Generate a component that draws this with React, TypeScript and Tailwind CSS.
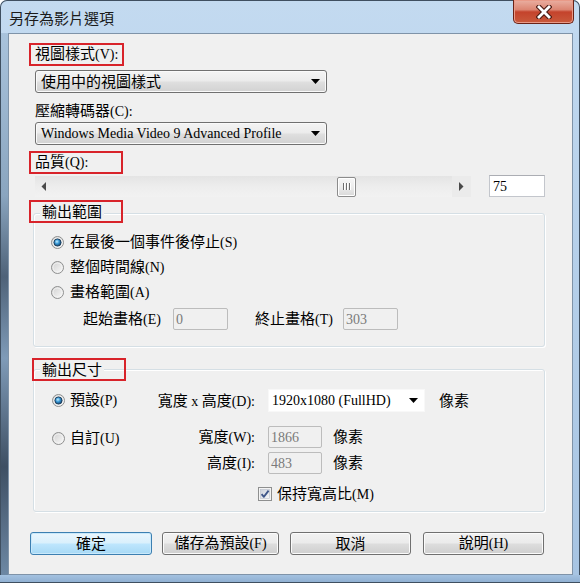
import React from "react";

const CJK = /[\u2E80-\u9FFF\uF900-\uFAFF\uFF00-\uFFEF]/;
const CJK_SPLIT = /([\u2E80-\u9FFF\uF900-\uFAFF\uFF00-\uFFEF]+)/;

function T({ s, className = "" }: { s: string; className?: string }) {
  const parts = s.split(CJK_SPLIT).filter((p) => p.length > 0);
  return (
    <span className={className}>
      {parts.map((p, i) =>
        CJK.test(p) ? (
          <span key={i} className="text-[15px]">
            {p}
          </span>
        ) : (
          <span key={i} className="text-[14px]">
            {p}
          </span>
        )
      )}
    </span>
  );
}

function Arrow() {
  return (
    <svg width="9" height="5" viewBox="0 0 9 5" className="shrink-0">
      <path d="M0 0H9L4.5 5Z" fill="#000" />
    </svg>
  );
}

function Radio({ checked }: { checked?: boolean }) {
  return (
    <svg width="13" height="13" viewBox="0 0 13 13" className="shrink-0">
      <defs>
        <linearGradient id="rbg" x1="0" y1="0" x2="1" y2="1">
          <stop offset="0" stopColor="#cfcfcf" />
          <stop offset="1" stopColor="#fbfbfb" />
        </linearGradient>
        <radialGradient id="rdot" cx="0.42" cy="0.38" r="0.65">
          <stop offset="0" stopColor="#c6f0ff" />
          <stop offset="0.45" stopColor="#3a9ad8" />
          <stop offset="1" stopColor="#0f3d66" />
        </radialGradient>
      </defs>
      <circle cx="6.5" cy="6.5" r="6" fill="url(#rbg)" stroke="#8e8f8f" strokeWidth="1" />
      <circle cx="6.5" cy="6.5" r="4.5" fill="none" stroke="#f4f4f4" strokeWidth="0.8" />
      {checked && <circle cx="6.5" cy="6.5" r="3.6" fill="url(#rdot)" stroke="#1b3a57" strokeWidth="0.9" />}
    </svg>
  );
}

function Check() {
  return (
    <svg width="14" height="14" viewBox="0 0 14 14" className="shrink-0">
      <defs>
        <linearGradient id="cbg" x1="0" y1="0" x2="1" y2="1">
          <stop offset="0" stopColor="#cbd1dc" />
          <stop offset="1" stopColor="#f6f7f9" />
        </linearGradient>
      </defs>
      <rect x="0.5" y="0.5" width="13" height="13" fill="#f4f4f4" stroke="#8e8f8f" />
      <rect x="2.5" y="2.5" width="9" height="9" fill="url(#cbg)" stroke="#b9bfca" strokeWidth="0.6" />
      <path d="M3.6 7.2L5.9 9.8L10.6 3.6" fill="none" stroke="#3e568a" strokeWidth="1.9" strokeLinejoin="round" />
    </svg>
  );
}

function RedBox({ children, className }: { children: React.ReactNode; className: string }) {
  return <div className={"border-2 border-[#d8232a] h-[23px] flex items-center " + className}>{children}</div>;
}

function Combo({ text }: { text: string }) {
  return (
    <div className="ml-[6px] w-[292px] h-[23px] rounded-[3px] border border-[#707070] bg-[linear-gradient(to_bottom,#f4f4f4_0%,#ececec_45%,#dedede_55%,#d2d2d2_100%)] shadow-[inset_0_0_0_1px_#fafafa] flex items-center pl-[5px] pr-[6px]">
      <T s={text} className="flex-1 leading-[16px] whitespace-nowrap" />
      <Arrow />
    </div>
  );
}

function DisabledInput({ value, w }: { value: string; w: string }) {
  return (
    <div className={"h-[22px] border border-[#bcbcbc] rounded-[2px] bg-[#f0f0f0] flex items-center pl-[2px] text-[14px] text-[#7a7a7a] " + w}>
      {value}
    </div>
  );
}

function Btn({ label, primary, className }: { label: string; primary?: boolean; className: string }) {
  return (
    <div
      className={
        "h-[23px] rounded-[3px] border flex items-center justify-center leading-[16px] " +
        (primary
          ? "border-[#3c7fb1] bg-[linear-gradient(to_bottom,#eaf6fd_0%,#d9f0fc_48%,#bee6fd_52%,#a7d9f5_100%)] shadow-[inset_0_0_0_1px_#c9e9fb] "
          : "border-[#707070] bg-[linear-gradient(to_bottom,#f2f2f2_0%,#ebebeb_48%,#dddddd_52%,#cfcfcf_100%)] shadow-[inset_0_0_0_1px_#fbfbfb] ") +
        className
      }
    >
      <T s={label} />
    </div>
  );
}

export default function App() {
  return (
    <div className="w-[580px] h-[583px] overflow-hidden rounded-t-[7px] shadow-[inset_0_0_0_1px_#3f4f60] bg-[linear-gradient(to_bottom,#c3daf0_0%,#b8d2ec_40%,#a9c5e3_100%)] flex flex-col text-black font-['Liberation_Serif','Noto_Sans_CJK_TC',serif]">
      {/* Title bar */}
      <div className="h-[33px] flex items-start shrink-0">
        <div className="pl-[9px] pt-[8px] text-[15px] leading-[20px] text-[#1a1a1a] font-['Noto_Sans_CJK_TC',sans-serif]">
          另存為影片選項
        </div>
        <div className="ml-auto mr-[6px] w-[61px] h-[24px] rounded-b-[5px] border border-t-0 border-[#6a2216] bg-[linear-gradient(to_bottom,#eab0a2_0%,#dc8572_42%,#c4432c_52%,#c95a3c_100%)] shadow-[inset_0_0_0_1px_#e99a88] flex items-center justify-center">
          <svg width="16" height="14" viewBox="0 0 16 14">
            <path d="M3 2L13 12M13 2L3 12" stroke="#4a1a12" strokeWidth="5" strokeLinecap="square" />
            <path d="M3 2L13 12M13 2L3 12" stroke="#ffffff" strokeWidth="2.8" strokeLinecap="square" />
          </svg>
        </div>
      </div>

      {/* Body */}
      <div className="flex h-[542px] shrink-0">
        <div className="w-[8px] bg-[linear-gradient(to_bottom,#a9c3dc_0%,#8aa5bf_30%,#4e6278_45%,#7f9bb8_60%,#3e4f63_80%,#6d88a4_100%)] shadow-[inset_1px_0_0_#3f4f60]" />
        <div className="w-[565px] border border-[#7f93a8] bg-[#f0f0f0] flex flex-col pl-[20px]">
          {/* View style */}
          <RedBox className="mt-[9px] w-[95px] pl-[4px]">
            <T s="視圖樣式(V):" className="leading-[16px]" />
          </RedBox>
          <div className="mt-[4px]">
            <Combo text="使用中的視圖樣式" />
          </div>

          {/* Codec */}
          <div className="mt-[10px] ml-[6px] h-[16px] flex items-center">
            <T s="壓縮轉碼器(C):" className="leading-[16px]" />
          </div>
          <div className="mt-[3px]">
            <Combo text="Windows Media Video 9 Advanced Profile" />
          </div>

          {/* Quality */}
          <RedBox className="mt-[6px] w-[94px] pl-[4px]">
            <T s="品質(Q):" className="leading-[16px]" />
          </RedBox>
          <div className="mt-[1px] h-[23px] flex items-start">
            <div className="mt-[1px] ml-[6px] w-[436px] h-[21px] bg-[linear-gradient(to_bottom,#e4e4e4_0%,#ededed_50%,#f2f2f2_100%)] flex items-center">
              <div className="w-[17px] flex justify-center">
                <svg width="5" height="9" viewBox="0 0 5 9">
                  <path d="M5 0V9L0.5 4.5Z" fill="#4a4a4a" />
                </svg>
              </div>
              <div className="ml-[285px] w-[19px] h-[20px] rounded-[2px] border border-[#8c8c8c] bg-[linear-gradient(to_bottom,#f7f7f7_0%,#ececec_50%,#d9d9d9_100%)] shadow-[inset_0_0_0_1px_#ffffff] flex items-center justify-center gap-[2px]">
                <div className="w-[1px] h-[7px] bg-[#6e6e6e] shadow-[1px_0_0_#ffffff]" />
                <div className="w-[1px] h-[7px] bg-[#6e6e6e] shadow-[1px_0_0_#ffffff]" />
                <div className="w-[1px] h-[7px] bg-[#6e6e6e] shadow-[1px_0_0_#ffffff]" />
              </div>
              <div className="ml-auto w-[19px] h-[21px] flex items-center justify-center bg-[#ebebeb]">
                <svg width="5" height="9" viewBox="0 0 5 9">
                  <path d="M0 0V9L4.5 4.5Z" fill="#4a4a4a" />
                </svg>
              </div>
            </div>
            <div className="ml-[18px] w-[56px] h-[22px] bg-white border border-[#c3c6cc] border-t-[#abadb3] flex items-center pl-[3px] text-[14px]">
              75
            </div>
          </div>

          {/* Output range */}
          <RedBox className="mt-[2px] w-[94px] pl-[9px] relative z-10">
            <span className="bg-[#f0f0f0] px-[2px] leading-[16px]">
              <T s="輸出範圍" />
            </span>
          </RedBox>
          <div className="-mt-[10px] ml-[4px] w-[512px] h-[134px] rounded-[3px] border border-[#d5dfe5] shadow-[inset_1px_1px_0_#ffffff,1px_1px_0_#ffffff] flex flex-col pt-[16px] pl-[17px]">
            <div className="h-[25px] flex items-center gap-[6px]">
              <Radio checked />
              <T s="在最後一個事件後停止(S)" className="leading-[16px]" />
            </div>
            <div className="h-[25px] flex items-center gap-[6px]">
              <Radio />
              <T s="整個時間線(N)" className="leading-[16px]" />
            </div>
            <div className="h-[25px] flex items-center gap-[6px]">
              <Radio />
              <T s="畫格範圍(A)" className="leading-[16px]" />
            </div>
            <div className="mt-[3px] ml-[32px] h-[22px] flex items-center">
              <div className="w-[90px]">
                <T s="起始畫格(E)" className="leading-[16px]" />
              </div>
              <DisabledInput value="0" w="w-[55px]" />
              <div className="ml-[27px] w-[88px]">
                <T s="終止畫格(T)" className="leading-[16px]" />
              </div>
              <DisabledInput value="303" w="w-[55px]" />
            </div>
          </div>

          {/* Output size */}
          <RedBox className="mt-[11px] ml-[3px] w-[94px] pl-[6px] relative z-10">
            <span className="bg-[#f0f0f0] px-[2px] leading-[16px]">
              <T s="輸出尺寸" />
            </span>
          </RedBox>
          <div className="-mt-[12px] ml-[4px] w-[512px] h-[143px] rounded-[3px] border border-[#d5dfe5] shadow-[inset_1px_1px_0_#ffffff,1px_1px_0_#ffffff] flex flex-col pt-[19px]">
            <div className="h-[23px] flex items-center">
              <div className="w-[123px] pl-[18px] flex items-center gap-[5px]">
                <Radio checked />
                <T s="預設(P)" className="leading-[16px]" />
              </div>
              <div className="w-[111px] pr-[13px] text-right whitespace-nowrap">
                <T s="寬度 x 高度(D):" className="leading-[16px]" />
              </div>
              <div className="w-[157px] h-[23px] bg-white border border-[#f8f8f8] flex items-center pl-[3px] pr-[6px]">
                <T s="1920x1080 (FullHD)" className="flex-1 leading-[16px]" />
                <Arrow />
              </div>
              <div className="ml-[14px]">
                <T s="像素" className="leading-[16px]" />
              </div>
            </div>
            <div className="mt-[14px] h-[22px] flex items-center">
              <div className="w-[123px] pl-[18px] flex items-center gap-[5px] mt-[3px]">
                <Radio />
                <T s="自訂(U)" className="leading-[16px]" />
              </div>
              <div className="w-[111px] pr-[13px] text-right">
                <T s="寬度(W):" className="leading-[16px]" />
              </div>
              <DisabledInput value="1866" w="w-[54px]" />
              <div className="ml-[11px]">
                <T s="像素" className="leading-[16px]" />
              </div>
            </div>
            <div className="mt-[4px] h-[22px] flex items-center">
              <div className="w-[123px]" />
              <div className="w-[111px] pr-[13px] text-right">
                <T s="高度(I):" className="leading-[16px]" />
              </div>
              <DisabledInput value="483" w="w-[54px]" />
              <div className="ml-[11px]">
                <T s="像素" className="leading-[16px]" />
              </div>
            </div>
            <div className="mt-[12px] h-[16px] pl-[224px] flex items-center gap-[5px]">
              <Check />
              <T s="保持寬高比(M)" className="leading-[16px]" />
            </div>
          </div>

          {/* Buttons */}
          <div className="mt-[20px] flex">
            <Btn label="確定" primary className="ml-[1px] w-[122px]" />
            <Btn label="儲存為預設(F)" className="ml-[10px] w-[117px]" />
            <Btn label="取消" className="ml-[11px] w-[121px]" />
            <Btn label="說明(H)" className="ml-[12px] w-[121px]" />
          </div>
        </div>
        <div className="w-[7px] bg-[linear-gradient(to_bottom,#c0d8ef_0%,#a7c4e2_100%)] shadow-[inset_-1px_0_0_#3f4f60]" />
      </div>
      <div className="h-[8px] shrink-0 bg-[linear-gradient(to_bottom,#a3c1e0,#8eaed0)] shadow-[inset_0_-1px_0_#3f4f60]" />
    </div>
  );
}
